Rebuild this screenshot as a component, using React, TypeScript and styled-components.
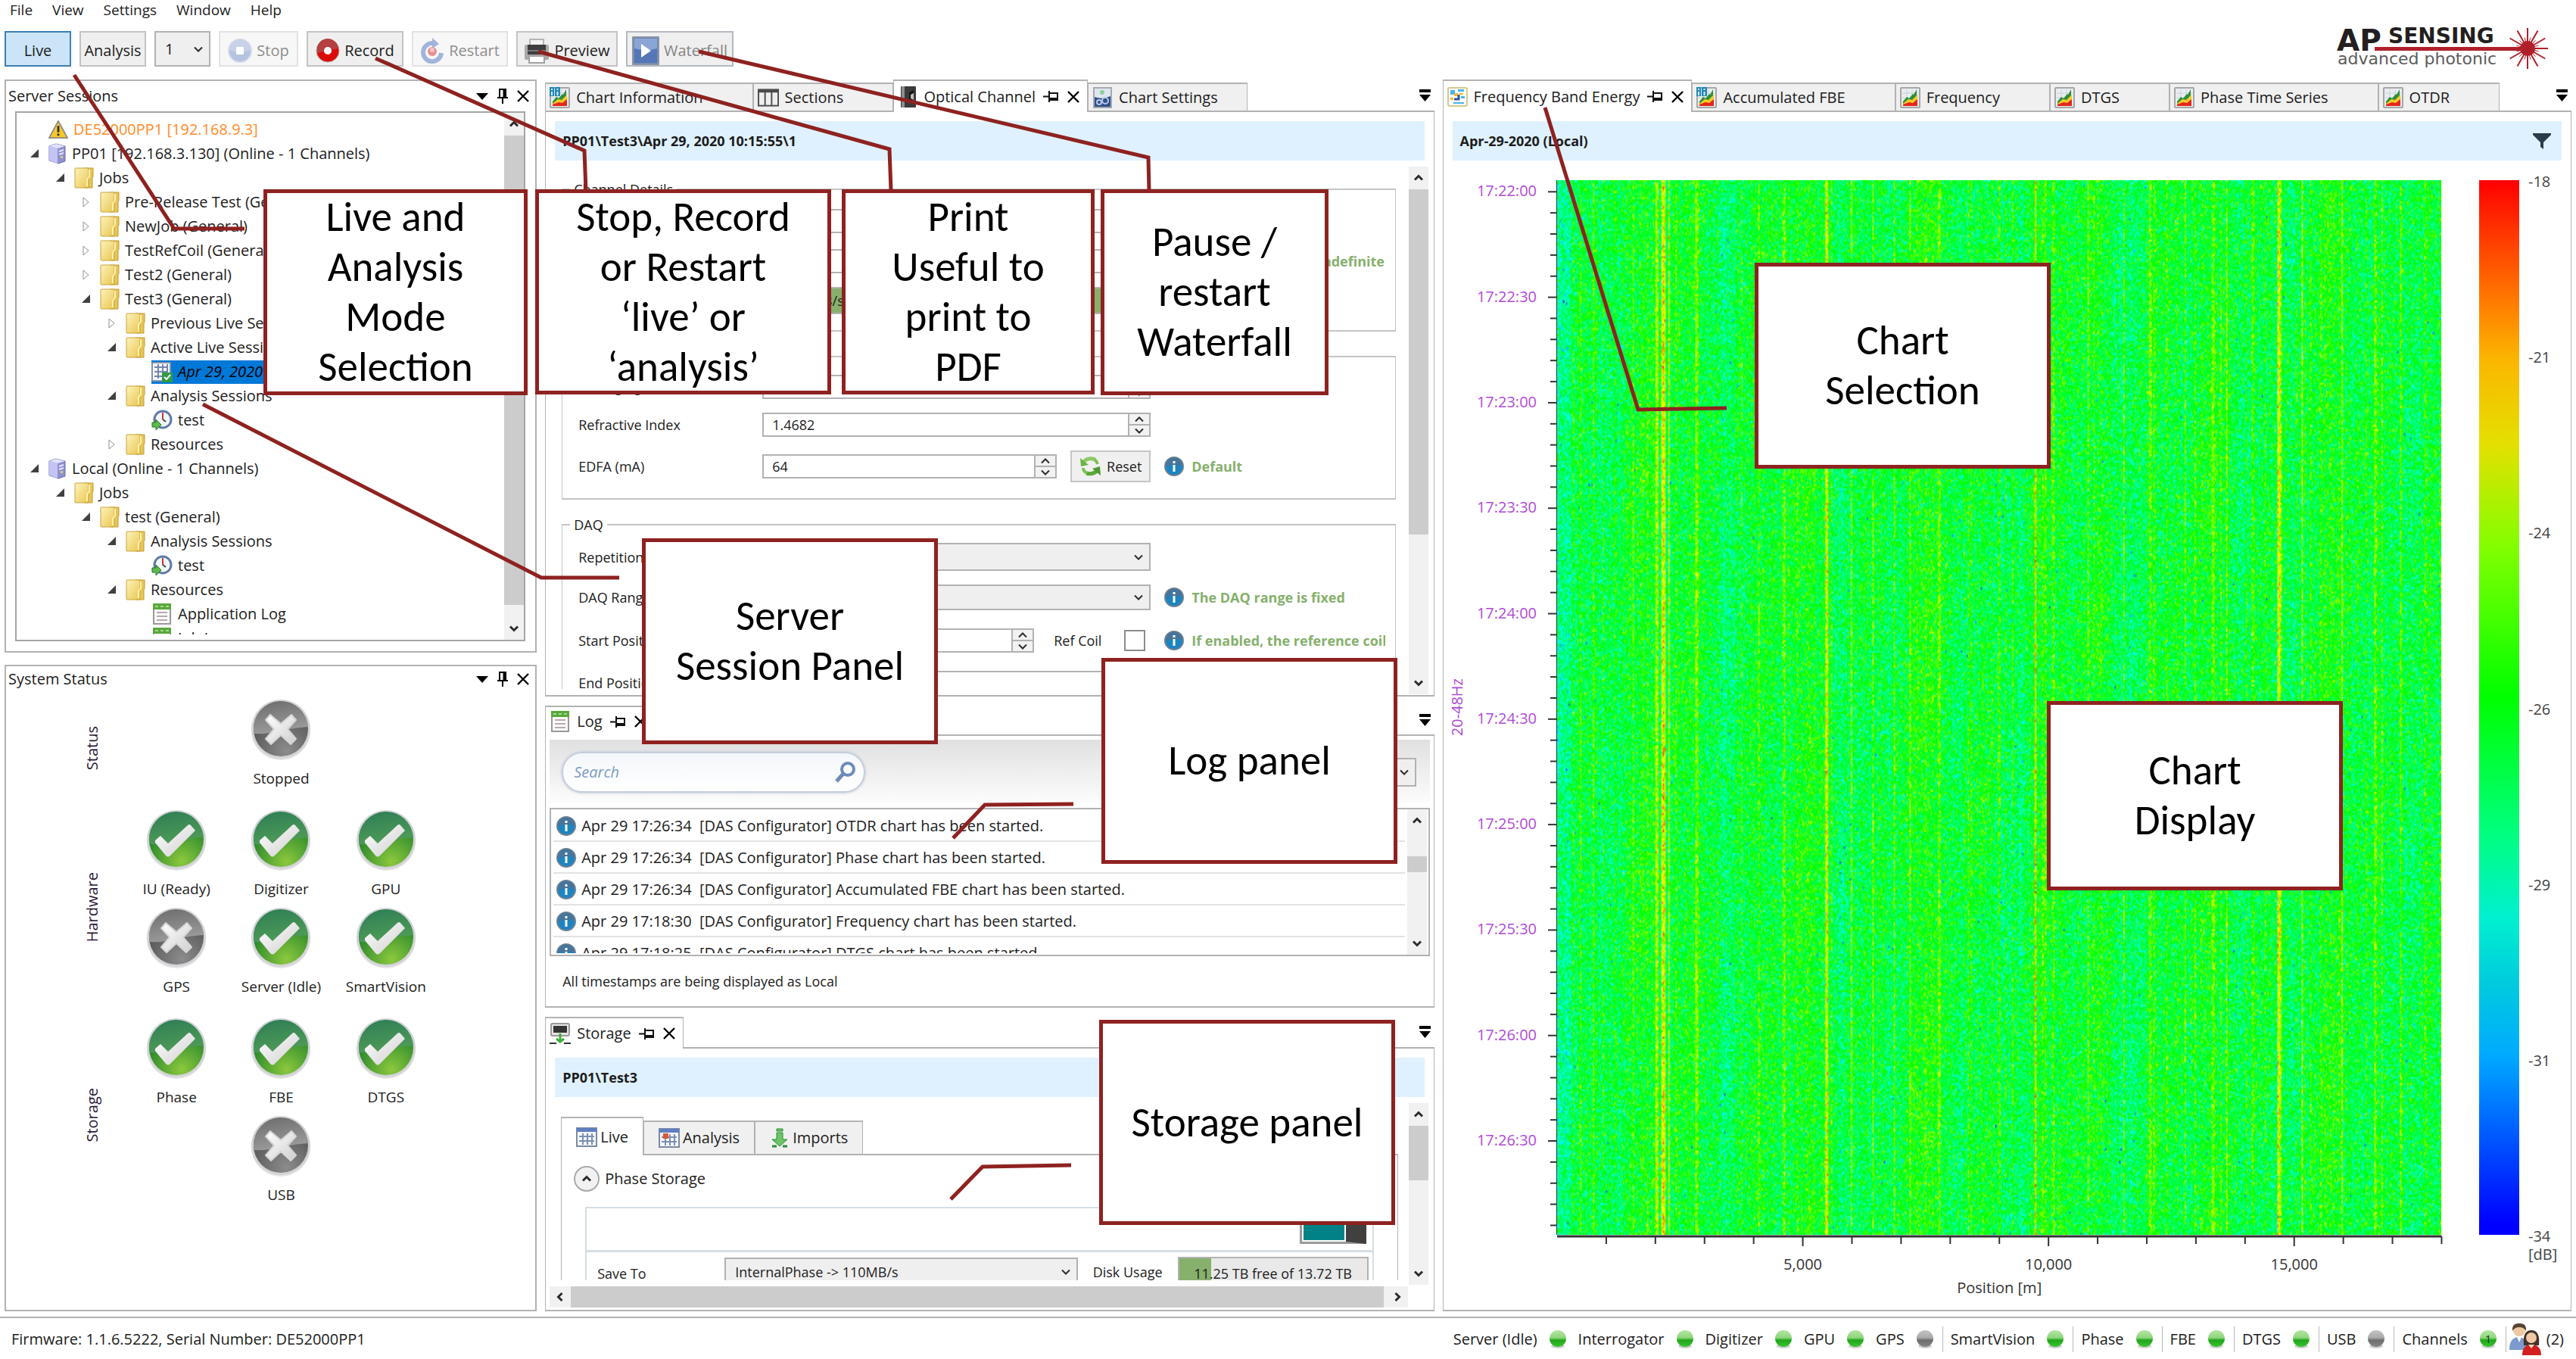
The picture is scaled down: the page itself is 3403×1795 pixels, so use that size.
import React, { useLayoutEffect, useRef } from "react";
import styled, { createGlobalStyle, css } from "styled-components";

const line = "#b2b2b2";
const accent = "#8e2220";

const Global = createGlobalStyle`
  *, *::before, *::after { box-sizing: border-box; }
  body { margin: 0; background: #fff; }
  body, button, input, select, textarea {
    font-family: "Open Sans", "Noto Sans", sans-serif;
    font-size: 20px;
    line-height: 26px;
    color: #1c1c1c;
  }
  button { cursor: pointer; }
`;

/* ---------- page frame ---------- */

const Page = styled.div`
  position: relative;
  display: flex;
  flex-direction: column;
  height: 100vh;
  min-height: 1200px;
  overflow: hidden;
`;

const Header = styled.header`
  display: flex;
  justify-content: space-between;
  padding: 0 34px 0 6px;
`;

const MenuBar = styled.nav`
  display: flex;
  gap: 26px;
  padding-left: 7px;
`;

const MenuLink = styled.a`
  color: #1c1c1c;
  font-size: 19px;
  text-decoration: none;
`;

const Toolbar = styled.div`
  display: flex;
  gap: 11px;
  margin: 15px 0 17px;
`;

const ToolButton = styled.button<{ $active?: boolean; $muted?: boolean; $width: number }>`
  display: flex;
  align-items: center;
  justify-content: center;
  gap: 6px;
  width: ${(p) => p.$width}px;
  height: 47px;
  padding: 4px 0 0;
  white-space: nowrap;
  border: 2px solid ${(p) => (p.$active ? "#3c80b4" : "#c3c3c3")};
  background: ${(p) => (p.$active ? "#cbe4f7" : "#efefef")};
  ${(p) => p.$muted && css`color: #858585; border-color: #b4b9c0;`}
  &:disabled {
    color: #8d8d8d;
    border-color: #e2e2e2;
    background: #f7f7f7;
  }
`;

const LogoBox = styled.div`
  padding-top: 34px;
`;

const Dock = styled.main`
  isolation: isolate;
  flex: 1;
  min-height: 0;
  display: grid;
  grid-template-columns: 703fr 1174fr 1491fr;
  gap: 11px;
  padding: 0 6px 7px;
`;

const Column = styled.div<{ $gap: number }>`
  display: flex;
  flex-direction: column;
  gap: ${(p) => p.$gap}px;
  min-width: 0;
  min-height: 0;
`;

/* ---------- panels ---------- */

const Panel = styled.section<{ $grow: number }>`
  flex: ${(p) => p.$grow} 1 0;
  min-height: 0;
  display: flex;
  flex-direction: column;
`;

const BoxPanel = styled(Panel)`
  border: 2px solid ${line};
`;

const PanelHeader = styled.div<{ $height: number }>`
  display: flex;
  align-items: center;
  gap: 12px;
  height: ${(p) => p.$height}px;
  padding: 0 8px 0 3px;
`;

const PanelTitle = styled.h2`
  flex: 1;
  margin: 0;
  font-size: 20px;
  font-weight: 400;
`;

const GlyphButton = styled.button`
  display: flex;
  align-items: center;
  justify-content: center;
  padding: 0;
  border: 0;
  background: none;
`;

const TabStrip = styled.div<{ $height: number }>`
  display: flex;
  align-items: flex-end;
  height: ${(p) => p.$height}px;
  padding-right: 5px;
`;

const Tab = styled.div<{ $active?: boolean; $tail?: number }>`
  position: relative;
  z-index: ${(p) => (p.$active ? 1 : 0)};
  display: flex;
  align-items: center;
  gap: 10px;
  height: ${(p) => (p.$active ? "calc(100% + 2px)" : "37px")};
  margin-bottom: ${(p) => (p.$active ? -2 : 0)}px;
  padding: 0 ${(p) => p.$tail ?? 10}px 0 5px;
  border: 2px solid ${line};
  border-bottom: 0;
  border-left-width: 1px;
  border-right-width: 1px;
  background: ${(p) => (p.$active ? "#fff" : "#f0f0f0")};
  white-space: nowrap;
`;

const TabLabel = styled.button`
  display: flex;
  align-items: center;
  gap: 8px;
  padding: 0;
  border: 0;
  background: none;
`;

const Push = styled.div`
  margin-left: auto;
  align-self: center;
`;

const Frame = styled.div`
  flex: 1;
  min-height: 0;
  display: flex;
  flex-direction: column;
  border: 2px solid ${line};
  border-left-width: 1px;
  border-right-width: 1px;
`;

const PathBar = styled.div`
  flex: none;
  display: flex;
  align-items: center;
  justify-content: space-between;
  height: 52px;
  margin: 12px 12px 8px;
  padding: 0 14px 0 10px;
  background: #dff1fe;
  font-size: 18px;
  font-weight: 700;
`;

/* ---------- scrolling ---------- */

const ScrollRow = styled.div`
  flex: 1;
  min-height: 0;
  display: flex;
`;

const ScrollContent = styled.div<{ $bottom: number }>`
  flex: 1;
  min-width: 0;
  overflow: hidden;
  margin-bottom: ${(p) => p.$bottom}px;
`;

const Bar = styled.div<{ $horizontal?: boolean }>`
  flex: none;
  display: flex;
  flex-direction: ${(p) => (p.$horizontal ? "row" : "column")};
  ${(p) => (p.$horizontal ? "height: 28px;" : "width: 26px;")}
  background: #f1f1f1;
`;

const BarButton = styled(GlyphButton)`
  flex: none;
  width: 28px;
  height: 30px;
  align-self: center;
`;

const BarPart = styled.div<{ $grow: number; $thumb?: boolean }>`
  flex: ${(p) => p.$grow} 1 0;
  background: ${(p) => (p.$thumb ? "#cccccc" : "transparent")};
`;

function ScrollBar({ before, size, after, horizontal }: { before: number; size: number; after: number; horizontal?: boolean }) {
  return (
    <Bar $horizontal={horizontal}>
      <BarButton aria-label="Scroll back"><Chevron dir={horizontal ? "left" : "up"} bold /></BarButton>
      <BarPart $grow={before} />
      <BarPart $grow={size} $thumb />
      <BarPart $grow={after} />
      <BarButton aria-label="Scroll forward"><Chevron dir={horizontal ? "right" : "down"} bold /></BarButton>
    </Bar>
  );
}

const VScroll = styled.div`
  display: flex;
  margin: 0 7px 1px 0;
`;

/* ---------- icons ---------- */

type Dir = "up" | "down" | "left" | "right";

function Chevron({ dir, bold }: { dir: Dir; bold?: boolean }) {
  const turn = { up: 0, right: 90, down: 180, left: 270 }[dir];
  return (
    <svg width="16" height="16" viewBox="0 0 16 16" aria-hidden="true">
      <path d="M3 10.500L8 5.500L13 10.500" fill="none" stroke="#2c2c2c" strokeWidth={bold ? 3 : 2} transform={`rotate(${turn} 8 8)`} />
    </svg>
  );
}

const Caret = () => (
  <svg width="16" height="9" viewBox="0 0 16 9"><path d="M0 0H16L8 9Z" fill="#000" /></svg>
);
const Pin = () => (
  <svg width="14" height="20" viewBox="0 0 14 20">
    <path d="M3 1H11V12H3ZM0 12H14M7 12V20" fill="none" stroke="#000" strokeWidth="2" />
    <path d="M9 1V12" stroke="#000" strokeWidth="3" />
  </svg>
);
const SidePin = () => (
  <svg width="22" height="15" viewBox="0 0 22 15">
    <path d="M8 3H19V12H8ZM8 0V15M0 7.500H8" fill="none" stroke="#111" strokeWidth="2" />
    <path d="M8 10.500H19" stroke="#111" strokeWidth="3" />
  </svg>
);
const Close = () => (
  <svg width="16" height="16" viewBox="0 0 16 16"><path d="M1 1L15 15M15 1L1 15" stroke="#000" strokeWidth="2.400" /></svg>
);
const Overflow = () => (
  <svg width="15" height="16" viewBox="0 0 15 16"><path d="M0 0H15V4H0ZM0 7H15L7.500 16Z" fill="#000" /></svg>
);

function ChartIcon({ info }: { info?: boolean }) {
  return (
    <svg width="27" height="28" viewBox="0 0 27 28">
      <rect x="1" y="1" width="25" height="26" rx="1" fill="#e9edf0" stroke="#a6a6a6" strokeWidth="2" />
      <path d="M3 8H24M3 14H24M9 3V25M16 3V25" stroke="#c9d2d8" />
      <path d="M4 19L9 13L12 15L17 9L18 10L22 3V25H4Z" fill="#2e8f3a" />
      <path d="M4 22L11 16L16 17L23 10V25H4Z" fill="#f7c927" />
      <path d="M4 25V23L12 20L17 21L23 16V25Z" fill="#e6261c" />
      {info && <path d="M0 0H6V12H0ZM7 0H14V12H7Z" fill="#2187b8" />}
      {info && <path d="M3 2V4M3 6V11M10.500 2V4M10.500 6V11" stroke="#d8f1ff" strokeWidth="2" />}
    </svg>
  );
}
const BandIcon = () => (
  <svg width="27" height="26" viewBox="0 0 27 26">
    <rect x="1" y="1" width="25" height="24" rx="2" fill="#fff" stroke="#d6c98c" strokeWidth="2" />
    <path d="M4 4H10V10H4ZM14 3H22V6H14ZM18 12H23V15H18ZM8 20H22V22H8Z" fill="#46b6ea" />
    <path d="M9 8H14V12H9ZM16 8H21V10H16ZM4 14H8V17H4Z" fill="#f3b637" />
    <path d="M15 10V16H9" fill="none" stroke="#3156a8" strokeWidth="3" />
  </svg>
);
const SectionsIcon = () => (
  <svg width="28" height="24" viewBox="0 0 29 24">
    <rect x="1" y="1" width="27" height="22" fill="#efefef" stroke="#4c4c4c" strokeWidth="2" />
    <path d="M1 3H28" stroke="#4c4c4c" strokeWidth="4" />
    <path d="M10 2V23M19 2V23" stroke="#4c4c4c" strokeWidth="2" />
  </svg>
);
const OpticalIcon = () => (
  <svg width="26" height="28" viewBox="-4 0 26 28">
    <rect width="20" height="28" rx="1" fill="#3b3b3b" />
    <rect x="1" width="4" height="28" fill="#8d8d8d" />
    <path d="M11 8L17 5V23L11 19Z" fill="#151515" />
    <path d="M13 11L17 9V18L13 16Z" fill="#bdbdbd" />
  </svg>
);
const SettingsIcon = () => (
  <svg width="27" height="28" viewBox="-1 0 27 28">
    <rect x="1" y="1" width="23" height="26" fill="#dfe6ee" stroke="#a4aab2" strokeWidth="2" />
    <path d="M2 13Q12 17 23 12V26H2Z" fill="#31508c" />
    <circle cx="12" cy="7" r="3" fill="#8fd09b" />
    <circle cx="8" cy="20" r="3" fill="none" stroke="#b8c7e6" strokeWidth="2" />
    <circle cx="16" cy="18" r="4" fill="none" stroke="#b8c7e6" strokeWidth="2" />
  </svg>
);
const Folder = () => (
  <svg width="26" height="28" viewBox="0 0 26 28">
    <defs>
      <linearGradient id="folderFace" x1="0" y1="0" x2="1" y2="1">
        <stop offset="0" stopColor="#fdf3bd" /><stop offset="1" stopColor="#e9c64f" />
      </linearGradient>
    </defs>
    <path d="M13 1H25V12L24 14V27H13Z" fill="#e8c556" stroke="#c09a35" />
    <rect x="1" y="1" width="18" height="26" rx="1" fill="url(#folderFace)" stroke="#c9a43e" />
    <path d="M20 3V12L17 16V25" fill="none" stroke="#fff2b0" strokeWidth="2" />
  </svg>
);
const ServerIcon = () => (
  <svg width="24" height="28" viewBox="0 0 24 28">
    <path d="M1 4L10 1L22 4V24L13 27L1 23Z" fill="#8f90cf" stroke="#6c6da8" />
    <path d="M1 4L12 7V27L1 23Z" fill="#c3c4f4" />
    <path d="M1 4L10 1L22 4L12 7Z" fill="#e2e2fb" />
    <path d="M14 11L20 9M14 15L20 13" stroke="#e5e6ff" strokeWidth="2" />
    <rect x="16" y="17" width="3" height="3" fill="#d8cf78" />
  </svg>
);
const Warning = () => (
  <svg width="26" height="28" viewBox="0 0 28 28">
    <path d="M14 2L27 26H1Z" fill="#f8c92a" stroke="#8a8a8a" strokeWidth="2" strokeLinejoin="round" />
    <path d="M14 9V18M14 20V23" stroke="#2b2b2b" strokeWidth="3" />
  </svg>
);
const SessionIcon = () => (
  <svg width="28" height="28" viewBox="0 0 28 28">
    <rect x="1" y="2" width="24" height="24" rx="1" fill="#f4f7fb" stroke="#8793ab" strokeWidth="2" />
    <path d="M4 8H22M4 14H22M4 20H14M9 4V23M15 4V23M21 4V16" stroke="#7586ad" strokeWidth="2" />
    <rect x="14" y="15" width="14" height="13" fill="#2f9b42" />
    <path d="M17 21L20 24L25 18" fill="none" stroke="#fff" strokeWidth="2" />
  </svg>
);
const ClockIcon = () => (
  <svg width="28" height="28" viewBox="0 0 28 28">
    <circle cx="15" cy="13" r="11" fill="#f4f8fd" stroke="#5f7ba6" strokeWidth="3" />
    <path d="M15 4V13" stroke="#d23430" strokeWidth="2" /><path d="M15 13L19 16" stroke="#444" strokeWidth="2" />
    <path d="M1 17H6V13L13 20L6 27V23H1Z" fill="#5cbb4b" stroke="#23741f" />
  </svg>
);
const LogIcon = () => (
  <svg width="28" height="28" viewBox="-2 0 28 28">
    <rect x="1" y="1" width="22" height="26" fill="#fafafa" stroke="#999" strokeWidth="2" />
    <rect width="24" height="8" fill="#58a83c" /><path d="M3 4H21" stroke="#a7da8c" strokeWidth="2" strokeDasharray="4 3" />
    <path d="M5 12H19M5 17H19M5 22H19" stroke="#b9a9b2" strokeWidth="2" />
  </svg>
);
const StorageIcon = () => (
  <svg width="28" height="28" viewBox="0 0 28 28">
    <rect x="2" y="1" width="24" height="16" rx="2" fill="#e4e4e4" stroke="#9a9a9a" strokeWidth="2" />
    <rect x="5" y="4" width="18" height="9" fill="#343434" />
    <path d="M14 14V25M9 21L14 25L19 21" stroke="#3fae3c" strokeWidth="3" fill="none" />
    <path d="M0 27H9M19 27H28" stroke="#333" strokeWidth="2" />
  </svg>
);
function GridIcon({ mark }: { mark?: boolean }) {
  return (
    <svg width="28" height="26" viewBox="0 0 28 26">
      <rect x="1" y="1" width="26" height="24" fill="#f5f8fc" stroke="#7a8aa8" strokeWidth="2" />
      <rect x="1" y="1" width="26" height="5" fill="#5f7fc0" />
      <path d="M4 12H24M4 18H24M9 8V23M15 8V23M21 8V23" stroke="#7b8fb6" strokeWidth="2" />
      {mark && <rect x="6" y="7" width="7" height="7" fill="#dd5730" />}
    </svg>
  );
}
const ImportIcon = () => (
  <svg width="26" height="26" viewBox="-1 0 26 26">
    <path d="M8 1H16V4H8ZM8 6H16V15H22L12 24L2 15H8Z" fill="#6cc567" stroke="#2e8a33" />
    <path d="M2 24H8M16 24H22" stroke="#2e8a33" strokeWidth="3" />
  </svg>
);
const StopIcon = () => (
  <svg width="32" height="32" viewBox="0 0 32 32">
    <circle cx="16" cy="16" r="15" fill="#b5c3e0" stroke="#d4dbea" strokeWidth="2" />
    <path d="M2 15A14 14 0 0 1 30 15Q16 20 2 15Z" fill="#c7d2e9" /><rect x="11" y="11" width="10" height="10" rx="1" fill="#fff" />
  </svg>
);
const RecordIcon = () => (
  <svg width="32" height="32" viewBox="0 0 32 32">
    <circle cx="16" cy="16" r="15" fill="#dc0b0b" stroke="#b8a3a3" strokeWidth="1" />
    <path d="M2 15A14 14 0 0 1 30 13Q18 15 2 19Z" fill="#b4403f" /><circle cx="16" cy="16" r="5" fill="#fff" />
  </svg>
);
const RestartIcon = () => (
  <svg width="32" height="34" viewBox="0 0 32 34">
    <path d="M19 7.500A12 12 0 1 0 28 20" fill="none" stroke="#a3b4da" strokeWidth="6" />
    <path d="M16 0L25 8L16 14Z" fill="#a3b4da" /><circle cx="16" cy="18" r="6" fill="#e88f92" /><circle cx="16" cy="16" r="3" fill="#f6c6c7" />
  </svg>
);
const PrinterIcon = () => (
  <svg width="34" height="34" viewBox="0 0 34 34">
    <path d="M8 2H26V12H8Z" fill="#f2f2f2" stroke="#b5b5b5" strokeWidth="2" />
    <rect x="1" y="9" width="32" height="20" rx="2" fill="#a9a9a9" /><rect x="5" y="9" width="24" height="13" fill="#3e3e3e" />
    <rect x="5" y="16" width="24" height="2" fill="#777" /><rect x="7" y="24" width="20" height="9" fill="#fff" stroke="#a2a2a2" strokeWidth="2" />
  </svg>
);
const PlayIcon = () => (
  <svg width="36" height="38" viewBox="0 0 36 38">
    <rect x="1" y="1" width="34" height="36" rx="2" fill="#5577b8" stroke="#8b95a8" strokeWidth="3" />
    <path d="M3 3H33V16Q18 20 3 16Z" fill="#8ba5d6" /><path d="M12 10L25 19L12 28Z" fill="#fff" />
  </svg>
);
const InfoIcon = () => (
  <svg width="26" height="28" viewBox="0 0 26 28">
    <circle cx="13" cy="14" r="12" fill="#1d84c2" stroke="#6d8292" strokeWidth="2" />
    <path d="M2 14A11 11 0 0 1 24 13Q13 11 2 14Z" fill="#47749b" />
    <path d="M13 7V10M13 12V21" stroke="#fff" strokeWidth="3" />
  </svg>
);
const ResetIcon = () => (
  <svg width="29" height="30" viewBox="0 0 29 30">
    <path d="M4 11Q10 2 21 6" fill="none" stroke="#8ccb62" strokeWidth="5" /><path d="M1 4L2 15L12 13Z" fill="#6bb344" />
    <path d="M25 18Q20 27 9 24" fill="none" stroke="#5aa838" strokeWidth="5" /><path d="M28 27L27 15L17 18Z" fill="#4d9a30" />
    <path d="M5 17Q5 22 10 24M24 12Q23 8 20 6" fill="none" stroke="#7dc155" strokeWidth="4" />
  </svg>
);
const Magnifier = () => (
  <svg width="28" height="28" viewBox="0 0 28 28">
    <circle cx="17" cy="10" r="8" fill="none" stroke="#6d8cb8" strokeWidth="4" /><path d="M11 16L2 26" stroke="#6d8cb8" strokeWidth="5" />
  </svg>
);
const Funnel = () => (
  <svg width="24" height="21" viewBox="0 0 24 21"><path d="M0 0H24V2L14 12V21L10 18V12L0 2Z" fill="#2a3b4c" /></svg>
);
const People = () => (
  <svg width="44" height="44" viewBox="0 0 44 44">
    <circle cx="14" cy="10" r="8" fill="#eec8a0" /><path d="M5 11Q4 0 14 1Q24 0 23 11Q20 6 14 6Q8 6 5 11Z" fill="#574436" />
    <path d="M1 36Q1 19 14 19Q22 19 24 30V36Z" fill="#7c9ad0" /><path d="M11 19L14 26L17 19Z" fill="#fff" />
    <path d="M20 30Q18 10 30 10Q42 10 40 30Z" fill="#43332c" /><circle cx="30" cy="20" r="7" fill="#f0c9a4" />
    <path d="M18 43Q18 29 30 29Q43 29 43 43Z" fill="#d22020" /><path d="M26 29L30 34L34 29Z" fill="#f7d9c0" />
  </svg>
);

function Led({ off, text }: { off?: boolean; text?: string }) {
  return (
    <svg width="22" height="26" viewBox="0 0 22 26">
      <defs>
        <linearGradient id="ledOn" x1="0" y1="0" x2="0" y2="1">
          <stop offset="0" stopColor="#b4e5a4" /><stop offset="0.450" stopColor="#8fd67c" /><stop offset="0.600" stopColor="#1fa51b" /><stop offset="1" stopColor="#3cc433" />
        </linearGradient>
        <linearGradient id="ledOff" x1="0" y1="0" x2="0" y2="1">
          <stop offset="0" stopColor="#c4c4c4" /><stop offset="0.450" stopColor="#a9a9a9" /><stop offset="0.600" stopColor="#6d6d6d" /><stop offset="1" stopColor="#858585" />
        </linearGradient>
      </defs>
      <ellipse cx="11" cy="22" rx="9" ry="3" fill="#cfcfcf" />
      <circle cx="11" cy="12" r="11" fill={off ? "url(#ledOff)" : "url(#ledOn)"} />
      {text && <text x="11" y="18" fontSize="15" textAnchor="middle" fill="#0d3d0b">{text}</text>}
    </svg>
  );
}

function StatusBadge({ ok }: { ok: boolean }) {
  const id = ok ? "badgeOk" : "badgeOff";
  return (
    <svg width="82" height="82" viewBox="0 0 82 82">
      <defs>
        <linearGradient id={id} x1="0" y1="0" x2="0.300" y2="1">
          <stop offset="0" stopColor={ok ? "#2d7d55" : "#6b6b6b"} />
          <stop offset="1" stopColor={ok ? "#4e9a58" : "#9a9a9a"} />
        </linearGradient>
        <radialGradient id={id + "Low"} cx="0.600" cy="0.900" r="0.700">
          <stop offset="0" stopColor={ok ? "#8cc83e" : "#8c8c8c"} />
          <stop offset="1" stopColor={ok ? "#26862a" : "#575757"} />
        </radialGradient>
        <linearGradient id="badgeMark" x1="0" y1="0" x2="1" y2="1">
          <stop offset="0" stopColor="#ffffff" /><stop offset="1" stopColor="#cfcfcf" />
        </linearGradient>
      </defs>
      <circle cx="41" cy="42" r="39" fill="#e4e4e4" />
      <circle cx="41" cy="40" r="39" fill="#d3d3d8" />
      <circle cx="41" cy="40" r="36" fill={`url(#${id}Low)`} />
      <path d="M5 41A36 36 0 0 1 77 37Q60 38 42 42Q22 47 6 46Z" fill={`url(#${id})`} />
      {ok ? (
        <path d="M13 41L20 35L30 45L56 21Q58 19 60 21L66 28L33 61Q30 64 27 61L13 44Z" fill="url(#badgeMark)" />
      ) : (
        <path d="M27 21L41 33L55 21L61 28L50 40L61 53L54 60L41 48L28 60L21 53L32 40L21 28Z" fill="url(#badgeMark)" stroke="#d6d6d6" strokeWidth="2" strokeLinejoin="round" />
      )}
    </svg>
  );
}

function Logo() {
  const rays = Array.from({ length: 24 }, (_, i) => {
    const a = (i * Math.PI) / 12;
    const r = i % 2 === 0 ? 27 : 15;
    return <line key={i} x1={252 + 9 * Math.cos(a)} y1={30 + 9 * Math.sin(a)} x2={252 + r * Math.cos(a)} y2={30 + r * Math.sin(a)} stroke="#b0202a" strokeWidth={i % 2 === 0 ? 2 : 1} />;
  });
  return (
    <svg width="282" height="60" viewBox="0 0 282 60" role="img" aria-label="AP Sensing advanced photonic">
      <g fontFamily="DejaVu Sans, sans-serif" fill="#231f20">
        <text x="0" y="33" fontSize="39" fontWeight="700">AP</text>
        <text x="68" y="23" fontSize="28" fontWeight="700">SENSING</text>
        <text x="1" y="51" fontSize="22" fill="#5c5c5c">advanced photonic</text>
      </g>
      <rect x="50" y="28" width="202" height="5" fill="#b0202a" />
      {rays}
      <circle cx="252" cy="30" r="10" fill="#b0202a" />
    </svg>
  );
}

/* ---------- form parts ---------- */

const SelectWrap = styled.div<{ $width?: number; $height: number }>`
  display: grid;
  ${(p) => (p.$width ? `width: ${p.$width}px;` : "flex: 1;")}
  height: ${(p) => p.$height}px;
  align-items: center;
  & > * { grid-area: 1 / 1; }
  & > svg { justify-self: end; margin-right: 8px; pointer-events: none; }
`;

const Picker = styled.select<{ $small?: boolean }>`
  appearance: none;
  width: 100%;
  height: 100%;
  padding: 0 28px 0 12px;
  border: 2px solid ${line};
  border-radius: 0;
  background: #efefef;
  font-size: ${(p) => (p.$small ? 18 : 20)}px;
`;

function Select({ label, value, width, height, small, id }: { label?: string; value: string; width?: number; height: number; small?: boolean; id?: string }) {
  return (
    <SelectWrap $width={width} $height={height}>
      <Picker aria-label={label} id={id} $small={small} defaultValue={value}><option>{value}</option></Picker>
      <Chevron dir="down" />
    </SelectWrap>
  );
}

const NumberWrap = styled.div<{ $width: number }>`
  display: flex;
  width: ${(p) => p.$width}px;
  height: 32px;
  border: 2px solid ${line};
`;

const NumberInput = styled.input`
  flex: 1;
  min-width: 0;
  padding: 0 11px;
  border: 0;
  background: #fff;
  font-size: 18px;
`;

const Spin = styled.div`
  display: grid;
  grid-template-rows: 1fr 1fr;
  width: 28px;
  gap: 2px;
  padding-left: 2px;
  background: ${line};
`;

const SpinButton = styled(GlyphButton)`
  min-height: 0;
  background: #f2f2f2;
  overflow: hidden;
`;

function NumberBox({ id, value, width }: { id: string; value: string; width: number }) {
  return (
    <NumberWrap $width={width}>
      <NumberInput id={id} defaultValue={value} />
      <Spin>
        <SpinButton aria-label="Increase"><Chevron dir="up" /></SpinButton>
        <SpinButton aria-label="Decrease"><Chevron dir="down" /></SpinButton>
      </Spin>
    </NumberWrap>
  );
}

const Fields = styled.div`
  padding: 18px 17px 0 21px;
`;

const Group = styled.fieldset`
  display: flex;
  flex-direction: column;
  gap: 18px;
  margin: 0 0 21px;
  padding: 12px 13px 21px 21px;
  border: 2px solid #c4c4c4;
  border-left-width: 1px;
  border-right-width: 1px;
  min-width: 0;
  font-size: 18px;
`;

const Legend = styled.legend`
  margin-left: -11px;
  padding: 0 5px;
  font-size: 18px;
  line-height: 24px;
`;

const FieldRow = styled.div<{ $height: number }>`
  flex: none;
  display: flex;
  align-items: center;
  height: ${(p) => p.$height}px;
`;

const FieldLabel = styled.label`
  flex: none;
  width: 243px;
  font-size: 18px;
`;

const Control = styled.div`
  flex: none;
  display: flex;
  align-items: center;
  gap: 18px;
  width: 513px;
`;

const Hint = styled.div`
  display: flex;
  align-items: center;
  gap: 10px;
  min-width: 0;
  margin-left: 18px;
  overflow: hidden;
  color: #86b06c;
  font-size: 18px;
  font-weight: 700;
  white-space: nowrap;
  & > svg { flex: none; }
`;

const Meter = styled.div`
  flex: 1;
  height: 36px;
  padding: 3px 12px;
  border: 2px solid ${line};
  background: #86b06c;
`;

const ResetButton = styled.button`
  display: flex;
  align-items: center;
  justify-content: center;
  gap: 7px;
  width: 106px;
  height: 42px;
  padding: 0;
  border: 2px solid #c6c6c6;
  background: #f0f0f0;
  font-size: 18px;
`;

const CoilLabel = styled.label`
  display: flex;
  flex: 1;
  align-items: center;
  justify-content: space-between;
  padding: 0 7px 0 8px;
  font-size: 18px;
`;

const CheckBox = styled.input`
  appearance: none;
  width: 28px;
  height: 28px;
  margin: 0;
  border: 2px solid #8c8c8c;
  background: #fff;
`;

/* ---------- session tree ---------- */

const TreeBox = styled.div`
  flex: 1;
  min-height: 0;
  display: flex;
  margin: 0 13px 13px 12px;
  border: 2px solid #a5a5a5;
`;

const Tree = styled.ul`
  margin: 0;
  padding: 6px 0 0;
  list-style: none;
`;

const TreeRow = styled.li<{ $depth: number }>`
  display: flex;
  align-items: center;
  height: 32px;
  padding-left: ${(p) => 12 + p.$depth * 34}px;
  white-space: nowrap;
`;

const Twisty = styled.span`
  display: flex;
  justify-content: center;
  width: 24px;
  margin-right: 6px;
`;

const TreeLabel = styled.span<{ $selected?: boolean; $alert?: boolean }>`
  display: flex;
  align-items: center;
  gap: 7px;
  ${(p) => p.$selected && css`background: #0078d7; font-style: italic; color: #000; height: 31px; padding-right: 8px;`}
  ${(p) => p.$alert && css`color: #ff8c28;`}
  & > svg { flex: none; }
`;

type Node = { d: number; t: string; i: "warn" | "server" | "folder" | "session" | "clock" | "log"; s?: "open" | "shut" };

const nodes: Node[] = [
  { d: 0, t: "DE52000PP1 [192.168.9.3]", i: "warn" },
  { d: 0, t: "PP01 [192.168.3.130] (Online - 1 Channels)", i: "server", s: "open" },
  { d: 1, t: "Jobs", i: "folder", s: "open" },
  { d: 2, t: "Pre-Release Test (General)", i: "folder", s: "shut" },
  { d: 2, t: "NewJob (General)", i: "folder", s: "shut" },
  { d: 2, t: "TestRefCoil (General)", i: "folder", s: "shut" },
  { d: 2, t: "Test2 (General)", i: "folder", s: "shut" },
  { d: 2, t: "Test3 (General)", i: "folder", s: "open" },
  { d: 3, t: "Previous Live Sessions", i: "folder", s: "shut" },
  { d: 3, t: "Active Live Sessions", i: "folder", s: "open" },
  { d: 4, t: "Apr 29, 2020 10:15:55", i: "session" },
  { d: 3, t: "Analysis Sessions", i: "folder", s: "open" },
  { d: 4, t: "test", i: "clock" },
  { d: 3, t: "Resources", i: "folder", s: "shut" },
  { d: 0, t: "Local (Online - 1 Channels)", i: "server", s: "open" },
  { d: 1, t: "Jobs", i: "folder", s: "open" },
  { d: 2, t: "test (General)", i: "folder", s: "open" },
  { d: 3, t: "Analysis Sessions", i: "folder", s: "open" },
  { d: 4, t: "test", i: "clock" },
  { d: 3, t: "Resources", i: "folder", s: "open" },
  { d: 4, t: "Application Log", i: "log" },
  { d: 4, t: "Job Log", i: "log" },
];

const nodeIcons = { warn: Warning, server: ServerIcon, folder: Folder, session: SessionIcon, clock: ClockIcon, log: LogIcon };

function TwistyMark({ state }: { state?: "open" | "shut" }) {
  if (!state) return null;
  return (
    <svg width="12" height="14" viewBox="0 0 12 14">
      {state === "open" ? <path d="M11 1V12H0Z" fill="#404040" /> : <path d="M2 1L9 7L2 13Z" fill="#fff" stroke="#8f8f8f" strokeWidth="1" />}
    </svg>
  );
}

/* ---------- system status ---------- */

const StatusBody = styled.div`
  display: flex;
  flex-direction: column;
  gap: 17px;
  padding-top: 9px;
`;

const StatusGroup = styled.div`
  display: grid;
  grid-template-columns: 26px 415px;
  column-gap: 29px;
  align-items: center;
  padding-left: 101px;
`;

const SideLabel = styled.h3`
  margin: 0;
  justify-self: center;
  font-size: 20px;
  font-weight: 400;
  color: #2a1838;
  writing-mode: vertical-rl;
  transform: rotate(180deg);
`;

const Badges = styled.div`
  display: grid;
  grid-template-columns: repeat(3, 1fr);
`;

const Badge = styled.div<{ $center?: boolean }>`
  display: flex;
  flex-direction: column;
  align-items: center;
  gap: 10px;
  padding-bottom: 11px;
  font-size: 19px;
  white-space: nowrap;
  ${(p) => p.$center && "grid-column: 2;"}
`;

const statusGroups: { name: string; items: [string, boolean][] }[] = [
  { name: "Status", items: [["Stopped", false]] },
  { name: "Hardware", items: [["IU (Ready)", true], ["Digitizer", true], ["GPU", true], ["GPS", false], ["Server (Idle)", true], ["SmartVision", true]] },
  { name: "Storage", items: [["Phase", true], ["FBE", true], ["DTGS", true], ["USB", false]] },
];

/* ---------- log ---------- */

const SearchBand = styled.div`
  flex: none;
  display: flex;
  align-items: center;
  justify-content: space-between;
  height: 85px;
  margin: 5px;
  padding: 0 18px 0 16px;
  background: linear-gradient(#e0e0e0, #fdfdfd);
`;

const SearchPill = styled.label`
  display: flex;
  align-items: center;
  width: 401px;
  height: 54px;
  padding: 0 10px 0 14px;
  border: 2px solid #c5cedb;
  border-radius: 27px;
  background: linear-gradient(#f4f7fa, #ffffff);
  box-shadow: 0 0 3px 1px #ccd3de;
`;

const SearchInput = styled.input`
  flex: 1;
  min-width: 0;
  padding: 0;
  border: 0;
  outline: 0;
  background: none;
  font-style: italic;
  &::placeholder { color: #7c9cc4; opacity: 1; }
`;

const ListBox = styled.div`
  flex: 1;
  min-height: 0;
  display: flex;
  margin: 0 5px;
  border: 2px solid ${line};
  padding-right: 2px;
`;

const LogList = styled.ul`
  margin: 0 3px;
  padding: 1px 0 0;
  list-style: none;
`;

const LogRow = styled.li`
  display: flex;
  align-items: center;
  gap: 7px;
  height: 42px;
  padding: 2px 0 0 4px;
  border-bottom: 2px solid #e3e3e3;
  white-space: pre;
`;

const LogFooter = styled.p`
  flex: none;
  margin: 0;
  padding: 20px 22px;
  font-size: 18px;
`;

const logs = [
  "Apr 29 17:26:34  [DAS Configurator] OTDR chart has been started.",
  "Apr 29 17:26:34  [DAS Configurator] Phase chart has been started.",
  "Apr 29 17:26:34  [DAS Configurator] Accumulated FBE chart has been started.",
  "Apr 29 17:18:30  [DAS Configurator] Frequency chart has been started.",
  "Apr 29 17:18:25  [DAS Configurator] DTGS chart has been started.",
];

/* ---------- storage ---------- */

const StoragePage = styled.div`
  padding: 18px 14px 0 20px;
`;

const SubTabs = styled.div`
  display: flex;
  align-items: flex-end;
  height: 49px;
`;

const SubTab = styled.button<{ $active?: boolean }>`
  position: relative;
  z-index: ${(p) => (p.$active ? 1 : 0)};
  display: flex;
  align-items: center;
  gap: 4px;
  height: ${(p) => (p.$active ? 51 : 44)}px;
  margin-bottom: ${(p) => (p.$active ? -2 : 0)}px;
  padding: 0 19px;
  border: 2px solid ${line};
  border-bottom: 0;
  border-left-width: 1px;
  border-right-width: 1px;
  background: ${(p) => (p.$active ? "#fff" : "#f0f0f0")};
`;

const SubPage = styled.div`
  height: 260px;
  padding: 14px 31px 0;
  border: 2px solid ${line};
  border-left-width: 1px;
  border-right-width: 1px;
`;

const Expander = styled.button`
  display: flex;
  align-items: center;
  gap: 7px;
  height: 34px;
  margin-left: -15px;
  padding: 0;
  border: 0;
  background: none;
`;

const ExpanderRing = styled.span`
  display: grid;
  place-items: center;
  width: 34px;
  height: 34px;
  border: 2px solid #a9a9a9;
  border-radius: 50%;
  background: #f2f2f2;
`;

const StorageGrid = styled.div`
  margin-top: 20px;
  border: 2px solid #d4dee4;
`;

const ToggleRow = styled.div`
  display: flex;
  justify-content: flex-end;
  height: 58px;
  padding: 8px;
  border-bottom: 3px solid #d4dee4;
`;

const Toggle = styled.button`
  width: 88px;
  height: 39px;
  padding: 0;
  border: 3px solid #9a9a9a;
  border-right: 27px solid #404040;
  background: #008287;
  box-shadow: inset 0 0 0 2px #fff;
`;

const SaveRow = styled.div`
  display: flex;
  align-items: center;
  gap: 20px;
  padding: 6px 5px 0 14px;
  font-size: 18px;
`;

const SaveLabel = styled.label`
  width: 148px;
  padding-top: 4px;
  font-size: 18px;
`;

const Usage = styled.div`
  width: 252px;
  height: 40px;
  padding: 7px 0;
  border: 2px solid ${line};
  background: linear-gradient(90deg, #86b06c 17%, #e9e9e9 17%);
  text-align: center;
  white-space: nowrap;
`;

const HScroll = styled.div`
  flex: none;
  margin: 1px 34px 3px 5px;
`;

/* ---------- chart ---------- */

const ChartArea = styled.div`
  flex: 1;
  min-height: 0;
  display: grid;
  grid-template-columns: 26px 119px 1fr 53px 68px;
  grid-template-rows: 1fr 99px;
  padding: 18px 0 0 5px;
`;

const BandLabel = styled.div`
  place-self: center;
  color: #b04bd6;
  writing-mode: vertical-rl;
  transform: rotate(180deg);
`;

const Fill = styled.svg`
  display: block;
  width: 100%;
  height: 100%;
  overflow: visible;
  font-size: 20px;
`;

const PlotCell = styled.div`
  position: relative;
  min-width: 0;
  min-height: 0;
  margin-right: 50px;
`;

const PlotCanvas = styled.canvas`
  position: absolute;
  inset: 0;
  width: 100%;
  height: 100%;
`;

const ColorBar = styled.div`
  background: linear-gradient(#ff0000, #ff8000 12%, #fbb600 17%, #e4e000 25%, #80ff00 35%, #00ff00 49%, #00ff80 62%, #00f0d0 70%, #00ccdd 76%, #00aaff 83%, #0000ff 99%);
`;

const AxisCell = styled.div`
  grid-column: 3;
  margin-right: 50px;
`;

function hueToRgb(h: number): [number, number, number] {
  const x = Math.max(0, Math.min(240, h)) / 60;
  if (x < 1) return [255, 255 * x, 0];
  if (x < 2) return [255 * (2 - x), 255, 0];
  if (x < 3) return [0, 255, 255 * (x - 2)];
  return [0, 255 * (4 - x), 255];
}

/* position along the fibre (0..1), strength, width in samples */
const streaks: [number, number, number][] = [
  [0.017, 26, 1], [0.041, 34, 1], [0.112, 46, 2], [0.118, 60, 3], [0.125, 30, 1], [0.156, 34, 2], [0.208, 28, 1],
  [0.255, 22, 2], [0.304, 60, 2], [0.309, 34, 1], [0.333, 50, 1], [0.357, 38, 1], [0.381, 36, 1], [0.398, 36, 1],
  [0.43, 24, 1], [0.5, 22, 1], [0.54, 72, 1], [0.56, 26, 1], [0.6, 34, 1], [0.641, 38, 1], [0.67, 30, 2],
  [0.71, 28, 1], [0.74, 30, 2], [0.757, 44, 1], [0.785, 34, 1], [0.814, 66, 2], [0.818, 36, 1], [0.842, 48, 1],
  [0.887, 36, 1], [0.924, 34, 1], [0.953, 42, 1], [0.98, 22, 2],
];

function Waterfall() {
  const ref = useRef<HTMLCanvasElement>(null);
  useLayoutEffect(() => {
    const canvas = ref.current;
    const ctx = canvas?.getContext("2d");
    if (!canvas || !ctx) return;
    const w = 620;
    const h = 500;
    canvas.width = w;
    canvas.height = h;
    let seed = 20200429;
    const rnd = () => {
      seed = (seed * 1664525 + 1013904223) >>> 0;
      return seed / 4294967296;
    };
    const base: number[] = [];
    for (let x = 0; x < w; x++) {
      const u = x / w;
      let b = 131 + 5 * Math.sin(u * 41) + 5 * Math.sin(u * 97 + 2) + (rnd() - 0.5) * 16;
      if (rnd() < 0.07) b -= 20;
      if (x < 14) b += 14;
      base.push(b);
    }
    for (const [p, s, n] of streaks) {
      const c = Math.round(p * w);
      for (let k = 0; k < n; k++) base[c + k] -= s;
    }
    const img = ctx.createImageData(w, h);
    for (let y = 0; y < h; y++) {
      for (let x = 0; x < w; x++) {
        let v = base[x] + (rnd() + rnd() + rnd() - 1.5) * 36 + 4 * Math.sin(y / 31 + x / 9);
        if (rnd() < 0.006) v += 45;
        const [r, g, b] = hueToRgb(v);
        const o = (y * w + x) * 4;
        img.data[o] = r;
        img.data[o + 1] = g;
        img.data[o + 2] = b;
        img.data[o + 3] = 255;
      }
    }
    ctx.putImageData(img, 0, 0);
  }, []);
  return <PlotCanvas ref={ref} role="img" aria-label="Frequency band energy waterfall" />;
}

const times = ["17:22:00", "17:22:30", "17:23:00", "17:23:30", "17:24:00", "17:24:30", "17:25:00", "17:25:30", "17:26:00", "17:26:30"];

function TimeAxis() {
  return (
    <Fill>
      <line x1="119" x2="119" y1="0" y2="100%" stroke="#333" strokeWidth="2" />
      {Array.from({ length: 50 }, (_, i) => (
        <line key={i} x1={i % 5 === 0 ? 107 : 110} x2="119" y1={`${1.1 + i * 2}%`} y2={`${1.1 + i * 2}%`} stroke="#333" strokeWidth="2" />
      ))}
      {times.map((t, i) => (
        <text key={t} x="92" y={`${1.1 + i * 10}%`} dy="6" textAnchor="end" fill="#b04bd6">{t}</text>
      ))}
    </Fill>
  );
}

function PositionAxis() {
  return (
    <Fill>
      <line x1="0" x2="100%" y1="2" y2="2" stroke="#333" strokeWidth="3" />
      {Array.from({ length: 18 }, (_, i) => i + 1).map((k) => (
        <line key={k} x1={`${(k * 100) / 18}%`} x2={`${(k * 100) / 18}%`} y1="2" y2={k % 5 === 0 ? 15 : 12} stroke="#333" strokeWidth="2" />
      ))}
      {[5, 10, 15].map((k) => (
        <text key={k} x={`${(k * 100) / 18}%`} y="46" textAnchor="middle" fill="#333">{`${k},000`}</text>
      ))}
      <text x="50%" y="77" textAnchor="middle" fill="#333">Position [m]</text>
    </Fill>
  );
}

function Scale() {
  return (
    <Fill>
      {["-18", "-21", "-24", "-26", "-29", "-31", "-34"].map((t, i) => (
        <text key={t} x="12" y={`${(i * 100) / 6}%`} dy="9" fill="#444">{t}</text>
      ))}
      <text x="12" y="100%" dy="33" fill="#444">[dB]</text>
    </Fill>
  );
}

/* ---------- status bar ---------- */

const StatusBar = styled.footer`
  flex: none;
  display: flex;
  align-items: center;
  justify-content: space-between;
  height: 56px;
  padding: 2px 16px 0 15px;
  border-top: 2px solid ${line};
  white-space: nowrap;
`;

const Leds = styled.div`
  display: flex;
  align-items: center;
`;

const LedItem = styled.span<{ $divided?: boolean }>`
  display: flex;
  align-items: center;
  gap: 16px;
  height: 34px;
  padding-right: ${(p) => (p.$divided ? 12 : 16)}px;
  margin-right: ${(p) => (p.$divided ? 10 : 0)}px;
  border-right: ${(p) => (p.$divided ? "1px solid #b9b9b9" : "0")};
`;

const Users = styled.span`
  display: flex;
  align-items: center;
  gap: 6px;
  margin-left: -7px;
`;

/* ---------- annotations ---------- */

const Callout = styled.div<{ $x: number; $y: number; $w: number; $h: number }>`
  position: absolute;
  left: ${(p) => p.$x}px;
  top: ${(p) => p.$y}px;
  width: ${(p) => p.$w}px;
  height: ${(p) => p.$h}px;
  display: flex;
  flex-direction: column;
  align-items: center;
  justify-content: center;
  border: 5px solid ${accent};
  background: #fff;
  color: #000;
  font-family: Carlito, Lato, sans-serif;
  font-size: 55px;
  line-height: 66px;
  white-space: nowrap;
`;

const Pointers = styled.svg`
  position: absolute;
  inset: 0;
  width: 100%;
  height: 100%;
  pointer-events: none;
`;

const callouts: { at: [number, number, number, number]; lines: string[] }[] = [
  { at: [348, 250, 349, 272], lines: ["Live and", "Analysis", "Mode", "Selection"] },
  { at: [707, 250, 391, 271], lines: ["Stop, Record", "or Restart", "‘live’ or", "‘analysis’"] },
  { at: [1112, 250, 334, 271], lines: ["Print", "Useful to", "print to", "PDF"] },
  { at: [1454, 250, 301, 272], lines: ["Pause /", "restart", "Waterfall"] },
  { at: [848, 711, 391, 272], lines: ["Server", "Session Panel"] },
  { at: [1455, 869, 391, 272], lines: ["Log panel"] },
  { at: [1452, 1347, 391, 271], lines: ["Storage panel"] },
  { at: [2318, 347, 391, 272], lines: ["Chart", "Selection"] },
  { at: [2704, 926, 391, 250], lines: ["Chart", "Display"] },
];

const pointers = [
  "98,99 230,302 323,302",
  "496,77 772,199 774,252",
  "711,68 1175,197 1177,252",
  "923,68 1517,208 1518,252",
  "268,534 715,763 818,763",
  "2041,142 2164,541 2281,539",
  "1259,1107 1301,1063 1418,1062",
  "1256,1584 1298,1541 1415,1539",
];

/* ---------- shared panel pieces ---------- */

function PanelTools() {
  return (
    <>
      <GlyphButton aria-label="Menu"><Caret /></GlyphButton>
      <GlyphButton aria-label="Pin"><Pin /></GlyphButton>
      <GlyphButton aria-label="Close"><Close /></GlyphButton>
    </>
  );
}

function ActiveTab({ icon, label }: { icon: React.ReactNode; label: string }) {
  return (
    <Tab $active>
      <TabLabel>{icon}{label}</TabLabel>
      <GlyphButton aria-label="Pin"><SidePin /></GlyphButton>
      <GlyphButton aria-label="Close"><Close /></GlyphButton>
    </Tab>
  );
}

function IdleTab({ icon, label, tail = 65 }: { icon: React.ReactNode; label: string; tail?: number }) {
  return (
    <Tab $tail={tail}>
      <TabLabel>{icon}{label}</TabLabel>
    </Tab>
  );
}

function TabMenu() {
  return <Push><GlyphButton aria-label="More tabs"><Overflow /></GlyphButton></Push>;
}

export default function App() {
  return (
    <Page>
      <Global />
      <Header>
        <div>
          <MenuBar>
            {["File", "View", "Settings", "Window", "Help"].map((m) => <MenuLink key={m} href="#">{m}</MenuLink>)}
          </MenuBar>
          <Toolbar>
            <ToolButton $width={88} $active>Live</ToolButton>
            <ToolButton $width={88}>Analysis</ToolButton>
            <Select label="Channel" value="1" width={74} height={47} />
            <ToolButton $width={105} disabled><StopIcon />Stop</ToolButton>
            <ToolButton $width={128}><RecordIcon />Record</ToolButton>
            <ToolButton $width={127} disabled><RestartIcon />Restart</ToolButton>
            <ToolButton $width={134}><PrinterIcon />Preview</ToolButton>
            <ToolButton $width={142} $muted><PlayIcon />Waterfall</ToolButton>
          </Toolbar>
        </div>
        <LogoBox><Logo /></LogoBox>
      </Header>

      <Dock>
        <Column $gap={16}>
          <BoxPanel $grow={757}>
            <PanelHeader $height={40}><PanelTitle>Server Sessions</PanelTitle><PanelTools /></PanelHeader>
            <TreeBox>
              <ScrollContent $bottom={7}>
                <Tree>
                  {nodes.map((n, i) => {
                    const Icon = nodeIcons[n.i];
                    return (
                      <TreeRow key={i} $depth={n.d}>
                        <Twisty><TwistyMark state={n.s} /></Twisty>
                        <TreeLabel $selected={n.i === "session"} $alert={n.i === "warn"}><Icon />{n.t}</TreeLabel>
                      </TreeRow>
                    );
                  })}
                </Tree>
              </ScrollContent>
              <ScrollBar before={0} size={620} after={16} />
            </TreeBox>
          </BoxPanel>

          <BoxPanel $grow={854}>
            <PanelHeader $height={34}><PanelTitle>System Status</PanelTitle><PanelTools /></PanelHeader>
            <StatusBody>
              {statusGroups.map((g) => (
                <StatusGroup key={g.name}>
                  <SideLabel>{g.name}</SideLabel>
                  <Badges>
                    {g.items.map(([name, ok]) => (
                      <Badge key={name} $center={name === "Stopped" || name === "USB"}>
                        <StatusBadge ok={ok} />
                        {name}
                      </Badge>
                    ))}
                  </Badges>
                </StatusGroup>
              ))}
            </StatusBody>
          </BoxPanel>
        </Column>

        <Column $gap={12}>
          <Panel $grow={815}>
            <TabStrip $height={41}>
              <IdleTab icon={<ChartIcon info />} label="Chart Information" />
              <IdleTab icon={<SectionsIcon />} label="Sections" />
              <ActiveTab icon={<OpticalIcon />} label="Optical Channel" />
              <IdleTab icon={<SettingsIcon />} label="Chart Settings" tail={38} />
              <TabMenu />
            </TabStrip>
            <Frame>
              <PathBar>PP01\Test3\Apr 29, 2020 10:15:55\1</PathBar>
              <ScrollRow>
                <ScrollContent $bottom={8}>
                  <Fields>
                    <Group>
                      <Legend>Channel Details</Legend>
                      <FieldRow $height={36}>
                        <FieldLabel htmlFor="phase">Phase Storage</FieldLabel>
                        <Control><NumberBox id="phase" value="Phase" width={513} /></Control>
                      </FieldRow>
                      <FieldRow $height={33}>
                        <FieldLabel htmlFor="limit">Record Limit</FieldLabel>
                        <Control><NumberBox id="limit" value="0" width={513} /></Control>
                        <Hint><InfoIcon />It will be recorded indefinitely</Hint>
                      </FieldRow>
                      <FieldRow $height={36}>
                        <FieldLabel as="span">Data Rate</FieldLabel>
                        <Control><Meter>43.20 MB/s</Meter></Control>
                      </FieldRow>
                    </Group>
                    <Group>
                      <Legend>Optical</Legend>
                      <FieldRow $height={32}>
                        <FieldLabel htmlFor="averaging">Averaging (m)</FieldLabel>
                        <Control><NumberBox id="averaging" value="10,0" width={513} /></Control>
                      </FieldRow>
                      <FieldRow $height={32}>
                        <FieldLabel htmlFor="refractive">Refractive Index</FieldLabel>
                        <Control><NumberBox id="refractive" value="1.4682" width={513} /></Control>
                      </FieldRow>
                      <FieldRow $height={42}>
                        <FieldLabel htmlFor="edfa">EDFA (mA)</FieldLabel>
                        <Control>
                          <NumberBox id="edfa" value="64" width={389} />
                          <ResetButton><ResetIcon />Reset</ResetButton>
                        </Control>
                        <Hint><InfoIcon />Default</Hint>
                      </FieldRow>
                    </Group>
                    <Group>
                      <Legend>DAQ</Legend>
                      <FieldRow $height={37}>
                        <FieldLabel htmlFor="repetition">Repetition Rate</FieldLabel>
                        <Control><Select id="repetition" value="2 kHz" height={37} small /></Control>
                      </FieldRow>
                      <FieldRow $height={34}>
                        <FieldLabel htmlFor="range">DAQ Range</FieldLabel>
                        <Control><Select id="range" value="Fixed" height={34} small /></Control>
                        <Hint><InfoIcon />The DAQ range is fixed</Hint>
                      </FieldRow>
                      <FieldRow $height={44}>
                        <FieldLabel htmlFor="start">Start Position</FieldLabel>
                        <Control>
                          <NumberBox id="start" value="0" width={359} />
                          <CoilLabel>Ref Coil<CheckBox type="checkbox" /></CoilLabel>
                        </Control>
                        <Hint><InfoIcon />If enabled, the reference coil</Hint>
                      </FieldRow>
                      <FieldRow $height={32}>
                        <FieldLabel htmlFor="end">End Position</FieldLabel>
                        <Control><NumberBox id="end" value="18000" width={513} /></Control>
                      </FieldRow>
                    </Group>
                  </Fields>
                </ScrollContent>
                <VScroll><ScrollBar before={0} size={454} after={180} /></VScroll>
              </ScrollRow>
            </Frame>
          </Panel>

          <Panel $grow={399}>
            <TabStrip $height={38}>
              <ActiveTab icon={<LogIcon />} label="Log" />
              <TabMenu />
            </TabStrip>
            <Frame>
              <SearchBand>
                <SearchPill>
                  <SearchInput type="text" placeholder="Search" aria-label="Search" />
                  <Magnifier />
                </SearchPill>
                <Select label="Severity" value="All" width={220} height={38} />
              </SearchBand>
              <ListBox>
                <ScrollContent $bottom={2}>
                  <LogList>
                    {logs.map((t) => <LogRow key={t}><InfoIcon />{t}</LogRow>)}
                  </LogList>
                </ScrollContent>
                <ScrollBar before={32} size={22} after={80} />
              </ListBox>
              <LogFooter>All timestamps are being displayed as Local</LogFooter>
            </Frame>
          </Panel>

          <Panel $grow={389}>
            <TabStrip $height={40}>
              <ActiveTab icon={<StorageIcon />} label="Storage" />
              <TabMenu />
            </TabStrip>
            <Frame>
              <PathBar>PP01\Test3</PathBar>
              <ScrollRow>
                <ScrollContent $bottom={7}>
                  <StoragePage>
                    <SubTabs>
                      <SubTab $active><GridIcon />Live</SubTab>
                      <SubTab><GridIcon mark />Analysis</SubTab>
                      <SubTab><ImportIcon />Imports</SubTab>
                    </SubTabs>
                    <SubPage>
                      <Expander><ExpanderRing><Chevron dir="up" bold /></ExpanderRing>Phase Storage</Expander>
                      <StorageGrid>
                        <ToggleRow><Toggle role="switch" aria-checked="true" aria-label="Phase storage" /></ToggleRow>
                        <SaveRow>
                          <SaveLabel htmlFor="saveTo">Save To</SaveLabel>
                          <Select id="saveTo" value="InternalPhase -> 110MB/s" height={38} small />
                          <span>Disk Usage</span>
                          <Usage>11.25 TB free of 13.72 TB</Usage>
                        </SaveRow>
                      </StorageGrid>
                    </SubPage>
                  </StoragePage>
                </ScrollContent>
                <VScroll><ScrollBar before={0} size={71} after={106} /></VScroll>
              </ScrollRow>
              <HScroll><ScrollBar horizontal before={0} size={1067} after={4} /></HScroll>
            </Frame>
          </Panel>
        </Column>

        <Column $gap={12}>
          <Panel $grow={1}>
            <TabStrip $height={41}>
              <ActiveTab icon={<BandIcon />} label="Frequency Band Energy" />
              <IdleTab icon={<ChartIcon info />} label="Accumulated FBE" />
              <IdleTab icon={<ChartIcon />} label="Frequency" />
              <IdleTab icon={<ChartIcon />} label="DTGS" />
              <IdleTab icon={<ChartIcon />} label="Phase Time Series" />
              <IdleTab icon={<ChartIcon />} label="OTDR" />
              <TabMenu />
            </TabStrip>
            <Frame>
              <PathBar>Apr-29-2020 (Local)<GlyphButton aria-label="Filter"><Funnel /></GlyphButton></PathBar>
              <ChartArea>
                <BandLabel>20-48Hz</BandLabel>
                <TimeAxis />
                <PlotCell><Waterfall /></PlotCell>
                <ColorBar />
                <Scale />
                <AxisCell><PositionAxis /></AxisCell>
              </ChartArea>
            </Frame>
          </Panel>
        </Column>
      </Dock>

      <StatusBar>
        <span>Firmware: 1.1.6.5222, Serial Number: DE52000PP1</span>
        <Leds>
          <LedItem>Server (Idle)<Led /></LedItem>
          <LedItem>Interrogator<Led /></LedItem>
          <LedItem>Digitizer<Led /></LedItem>
          <LedItem>GPU<Led /></LedItem>
          <LedItem $divided>GPS<Led off /></LedItem>
          <LedItem $divided>SmartVision<Led /></LedItem>
          <LedItem $divided>Phase<Led /></LedItem>
          <LedItem $divided>FBE<Led /></LedItem>
          <LedItem $divided>DTGS<Led /></LedItem>
          <LedItem $divided>USB<Led off /></LedItem>
          <LedItem $divided>Channels<Led text="1" /></LedItem>
          <Users><People />(2)</Users>
        </Leds>
      </StatusBar>

      {callouts.map((c) => (
        <Callout key={c.lines.join(" ")} $x={c.at[0]} $y={c.at[1]} $w={c.at[2]} $h={c.at[3]}>
          {c.lines.map((l) => <span key={l}>{l}</span>)}
        </Callout>
      ))}
      <Pointers aria-hidden="true">
        {pointers.map((p) => <polyline key={p} points={p} fill="none" stroke={accent} strokeWidth="5" />)}
      </Pointers>
    </Page>
  );
}
